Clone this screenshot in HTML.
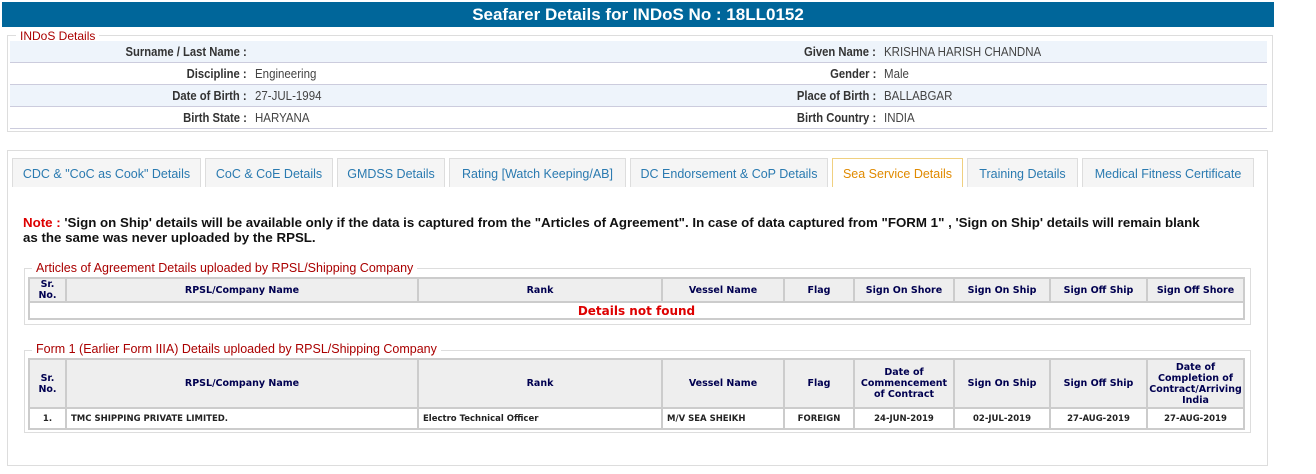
<!DOCTYPE html>
<html><head><style>
body{margin:0;width:1316px;height:474px;background:#fff;position:relative;font-family:"Liberation Sans",Arial,sans-serif;overflow:hidden}
.a{position:absolute}
.hdr{left:2px;top:2px;width:1272px;height:25px;background:#00669a;color:#fff;font-weight:bold;font-size:17px;text-align:center;line-height:25px}
.fs{border:1px solid #ddd;box-sizing:border-box}
.lg{background:#fff;color:#a00;font-size:12px;padding:0 4px;line-height:12px}
.row{left:10px;width:1257px;height:21px;border-bottom:1px solid #ccd;font-size:12.5px;line-height:22px;color:#333}
.row.b{background:#eef4fb}
.l{position:absolute;text-align:right;font-weight:bold;color:#333;transform:scaleX(.9);transform-origin:right}
.v{position:absolute;color:#444;transform:scaleX(.92);transform-origin:left;white-space:nowrap}
.tab{top:158px;height:29px;background:#f5f5f5;border:1px solid #ddd;border-bottom:none;box-sizing:border-box;color:#2a7ab0;font-size:12.5px;text-align:center;line-height:30px;white-space:nowrap}
.tab.s{background:#fff;border-color:#f0d080;color:#e08a00}
.note{left:23px;top:215px;font-size:13.3px;font-weight:bold;color:#111;line-height:15px;width:1185px}
table{position:absolute;border-collapse:collapse;font-family:"DejaVu Sans",Verdana,sans-serif;font-size:9.5px;font-weight:bold;color:#000050;table-layout:fixed}
td,th{border:2px solid #ccc;padding:0 1px;text-align:center;overflow:hidden}
th{background:#eee;line-height:11px}
td{color:#222;font-size:8.5px}
</style></head><body>
<div class="a hdr">Seafarer Details for INDoS No : 18LL0152</div>
<div class="a fs" style="left:7px;top:35px;width:1266px;height:97px"></div>
<div class="a lg" style="left:16px;top:30px">INDoS Details</div>
<div class="a row b" style="top:41px"><span class="l" style="right:1020px">Surname / Last Name :</span><span class="l" style="right:391px">Given Name :</span><span class="v" style="left:874px">KRISHNA HARISH CHANDNA</span></div>
<div class="a row" style="top:63px"><span class="l" style="right:1020px">Discipline :</span><span class="v" style="left:245px">Engineering</span><span class="l" style="right:391px">Gender :</span><span class="v" style="left:874px">Male</span></div>
<div class="a row b" style="top:85px"><span class="l" style="right:1020px">Date of Birth :</span><span class="v" style="left:245px">27-JUL-1994</span><span class="l" style="right:391px">Place of Birth :</span><span class="v" style="left:874px">BALLABGAR</span></div>
<div class="a row" style="top:107px"><span class="l" style="right:1020px">Birth State :</span><span class="v" style="left:245px">HARYANA</span><span class="l" style="right:391px">Birth Country :</span><span class="v" style="left:874px">INDIA</span></div>

<div class="a fs" style="left:7px;top:150px;width:1261px;height:316px"></div>
<div class="a tab" style="left:12px;width:189px">CDC &amp; "CoC as Cook" Details</div>
<div class="a tab" style="left:205px;width:128px">CoC &amp; CoE Details</div>
<div class="a tab" style="left:337px;width:108px">GMDSS Details</div>
<div class="a tab" style="left:449px;width:177px">Rating [Watch Keeping/AB]</div>
<div class="a tab" style="left:630px;width:198px">DC Endorsement &amp; CoP Details</div>
<div class="a tab s" style="left:832px;width:131px">Sea Service Details</div>
<div class="a tab" style="left:967px;width:111px">Training Details</div>
<div class="a tab" style="left:1082px;width:172px">Medical Fitness Certificate</div>

<div class="a note"><span style="color:#d00">Note :</span> 'Sign on Ship' details will be available only if the data is captured from the "Articles of Agreement". In case of data captured from "FORM 1" , 'Sign on Ship' details will remain blank as the same was never uploaded by the RPSL.</div>

<div class="a fs" style="left:24px;top:268px;width:1227px;height:57px"></div>
<div class="a lg" style="left:32px;top:262px;font-size:12.5px">Articles of Agreement Details uploaded by RPSL/Shipping Company</div>
<table style="left:28px;top:277px;width:1215px">
<colgroup><col style="width:37px"><col style="width:352px"><col style="width:244px"><col style="width:122px"><col style="width:70px"><col style="width:100px"><col style="width:96px"><col style="width:97px"><col style="width:97px"></colgroup>
<tr style="height:24px"><th>Sr.<br>No.</th><th>RPSL/Company Name</th><th>Rank</th><th>Vessel Name</th><th>Flag</th><th>Sign On Shore</th><th>Sign On Ship</th><th>Sign Off Ship</th><th>Sign Off Shore</th></tr>
<tr style="height:17px"><td colspan="9" style="color:#d00;font-size:12px;line-height:14px">Details not found</td></tr>
</table>

<div class="a fs" style="left:24px;top:350px;width:1227px;height:83px"></div>
<div class="a lg" style="left:32px;top:343px;font-size:12.5px">Form 1 (Earlier Form IIIA) Details uploaded by RPSL/Shipping Company</div>
<table style="left:28px;top:358px;width:1215px">
<colgroup><col style="width:37px"><col style="width:352px"><col style="width:244px"><col style="width:122px"><col style="width:70px"><col style="width:100px"><col style="width:96px"><col style="width:97px"><col style="width:97px"></colgroup>
<tr style="height:49px"><th>Sr.<br>No.</th><th>RPSL/Company Name</th><th>Rank</th><th>Vessel Name</th><th>Flag</th><th>Date of<br>Commencement<br>of Contract</th><th>Sign On Ship</th><th>Sign Off Ship</th><th>Date of<br>Completion of<br>Contract/Arriving<br>India</th></tr>
<tr style="height:21px"><td>1.</td><td style="text-align:left;padding-left:4px">TMC SHIPPING PRIVATE LIMITED.</td><td style="text-align:left;padding-left:4px">Electro Technical Officer</td><td style="text-align:left;padding-left:4px">M/V SEA SHEIKH</td><td>FOREIGN</td><td>24-JUN-2019</td><td>02-JUL-2019</td><td>27-AUG-2019</td><td>27-AUG-2019</td></tr>
</table>
</body></html>
